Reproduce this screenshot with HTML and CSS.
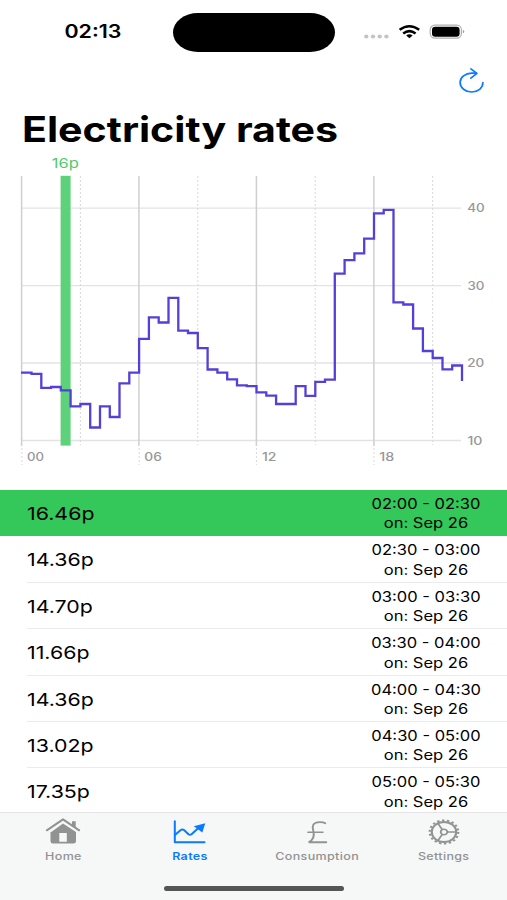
FILE: index.html
```html
<!DOCTYPE html>
<html lang="en">
<head>
    <meta charset="UTF-8">
    <meta name="viewport" content="width=device-width, initial-scale=1.0">
    <title>Electricity rates</title>
    <link rel="stylesheet" href="styles.css">
</head>
<body>
    <!-- Status bar -->
    <div class="status-bar">
        <div class="time"><span class="wide">02:13</span></div>
        <div class="island"></div>
        <div class="status-icons">
            <svg width="104" height="20" viewBox="0 0 104 20">
                <g fill="#c4c4c6">
                    <ellipse cx="4.3" cy="14.5" rx="2.2" ry="1.9"/>
                    <ellipse cx="11" cy="14.5" rx="2.2" ry="1.9"/>
                    <ellipse cx="17.7" cy="14.5" rx="2.2" ry="1.9"/>
                    <ellipse cx="24.4" cy="14.5" rx="2.2" ry="1.9"/>
                </g>
                <g fill="none" stroke="#000" stroke-width="2.5">
                    <path d="M37.6 7.800Q47.400 .700 57.200 7.800"/>
                    <path d="M41.200 11.500Q47.400 6.700 53.600 11.500"/>
                </g>
                <path d="M44.200 13.500Q47.400 11 50.600 13.500L47.400 16.300Z"/>
                <rect x="68.200" y="3.200" width="31.200" height="13" rx="4.600" fill="#fff" stroke="#b0b0b0" stroke-width="1.200"/>
                <rect x="70" y="4.700" width="27.600" height="10" rx="3.200"/>
                <path d="M100.800 7.800Q104 9.700 100.800 11.600Z" fill="#a0a0a0"/>
            </svg>
        </div>
    </div>

    <!-- Header -->
    <header>
        <button class="refresh" aria-label="Refresh">
            <svg width="28" height="28" viewBox="0 0 28 28" fill="none" stroke="#0a7aff" stroke-width="1.7" stroke-linecap="round" stroke-linejoin="round">
                <path d="M24.900 15.600C24.900 21 20 25 13.700 25S2.100 20.800 2.100 15.600 7.300 6.200 13.700 6.200H18"/>
                <path d="M12.900 1.900L18.900 6.400 12.900 11.200"/>
            </svg>
        </button>
        <h1><span class="wide">Electricity rates</span></h1>
    </header>

    <!-- Rates chart -->
    <svg class="chart" width="507" height="334" viewBox="0 156 507 334">
        <g class="grid-h">
            <path d="M21.500 208.200H461M21.500 285.600H461M21.500 363H461M21.500 440.500H461"/>
        </g>
        <g class="grid-v">
            <path d="M21.600 176V446M138.900 176V446M256.400 176V446M373.900 176V446"/>
        </g>
        <g class="grid-dash">
            <path d="M80.400 176V445M197.800 176V445M315.200 176V445M432.700 176V445"/>
            <path d="M21.900 448V465M139.200 448V465M256.400 448V465M373.900 448V465"/>
        </g>
        <rect class="now" x="60.600" y="175.800" width="10" height="269.800"/>
        <path class="line" id="rate-line"/>
        <text class="now-label" x="51.800" y="168.300" textLength="27" lengthAdjust="spacingAndGlyphs">16p</text>
        <g class="axis">
            <text x="27" y="461" textLength="17" lengthAdjust="spacingAndGlyphs">00</text>
            <text x="144.300" y="461" textLength="17.500" lengthAdjust="spacingAndGlyphs">06</text>
            <text x="262" y="461" textLength="14.500" lengthAdjust="spacingAndGlyphs">12</text>
            <text x="379.200" y="461" textLength="15" lengthAdjust="spacingAndGlyphs">18</text>
            <text x="467.300" y="212" textLength="17.500" lengthAdjust="spacingAndGlyphs">40</text>
            <text x="467.500" y="289.600" textLength="17" lengthAdjust="spacingAndGlyphs">30</text>
            <text x="467.300" y="367.200" textLength="17" lengthAdjust="spacingAndGlyphs">20</text>
            <text x="467.500" y="444.600" textLength="15" lengthAdjust="spacingAndGlyphs">10</text>
        </g>
    </svg>

    <!-- Rate list -->
    <ul class="rate-list" id="rate-list"></ul>

    <!-- Tab bar -->
    <nav class="tab-bar">
        <div class="tabs">
            <a class="tab">
                <svg width="36" height="28" viewBox="0 0 36 28">
                    <path d="M6.300 14L18 5.400 31 14V23.300Q31 25.500 28.500 25.500H8Q5.500 25.500 5.500 23.300V14ZM14.300 15V23.800H21.800V15Z" fill="currentColor" fill-rule="evenodd"/>
                    <path d="M1.600 12.600L18 1.300 34.400 12.600" fill="none" stroke="#f6f7f7" stroke-width="5"/>
                    <path d="M1.800 12.300L18 1.300 34.200 12.300" fill="none" stroke="currentColor" stroke-width="2" stroke-linecap="round" stroke-linejoin="round"/>
                    <path d="M27 3.300H30.700V9.500L27 7Z" fill="currentColor"/>
                </svg>
                <span class="wide">Home</span>
            </a>
            <a class="tab active">
                <svg width="36" height="28" viewBox="0 0 36 28">
                    <g fill="none" stroke="currentColor" stroke-width="2" stroke-linecap="round" stroke-linejoin="round">
                        <path d="M2.800 3.200V24.200H32.500"/>
                        <path d="M3.500 16.500L8.800 12Q10.500 10.800 12 12L16.500 16.300Q18 17.400 19.500 16.300L27 9.500"/>
                    </g>
                    <path d="M33.300 5.300L21.800 8.200 30.300 14.500Z" fill="currentColor"/>
                </svg>
                <span class="wide">Rates</span>
            </a>
            <a class="tab">
                <svg width="36" height="28" viewBox="0 0 36 28" fill="none" stroke="currentColor" stroke-width="1.900" stroke-linecap="round">
                    <path d="M26.300 5.300Q24.500 4.100 20.800 4.100C14 4.100 12.800 8 14.200 12.500C15.700 18 14.500 22 9.700 24.200H27.300"/>
                    <path d="M8.900 14.200H24" stroke-width="1.500"/>
                </svg>
                <span class="wide">Consumption</span>
            </a>
            <a class="tab">
                <svg width="36" height="28" viewBox="0 0 36 28" fill="none" stroke="currentColor">
                    <g transform="translate(18 14) scale(1.220 1)">
                        <circle r="10" stroke-width="1.800"/>
                        <circle r="11.700" stroke-width="1.800" stroke-dasharray="2 2.084"/>
                        <circle r="2.700" stroke-width="1.500"/>
                        <path d="M2.500 0H10M-1.300 -2.200L-5 -8.600M-1.300 2.200L-5 8.600" stroke-width="1.500"/>
                    </g>
                </svg>
                <span class="wide">Settings</span>
            </a>
        </div>
        <div class="home-indicator"></div>
    </nav>

    <script src="script.js"></script>
</body>
</html>
```
FILE: styles.css
```css
/* Global Styles */
* {
    box-sizing: border-box;
    margin: 0;
    padding: 0;
}

body {
    display: flex;
    flex-direction: column;
    width: 507px;
    height: 900px;
    overflow: hidden;
    background-color: #fff;
    color: #000;
    font-family: Inter, "Liberation Sans", sans-serif;
}

/* Expanded lettering */
.wide {
    display: inline-block;
    white-space: nowrap;
    transform: scaleX(1.19);
}

/* Status Bar */
.status-bar {
    display: grid;
    grid-template-columns: 173px 162px 1fr;
    height: 64px;
    flex: none;
}

.time {
    padding: 20px 0 0 13px;
    font-size: 18px;
    font-weight: 600;
    line-height: 24px;
    text-align: center;
}

.island {
    height: 39px;
    margin-top: 13px;
    border-radius: 25px / 19.5px;
    background-color: #000;
}

.status-icons {
    padding: 22px 0 0 27px;
}

/* Header */
header {
    height: 92px;
    flex: none;
}

.refresh {
    display: block;
    width: 28px;
    height: 28px;
    margin: 3px 21px 0 auto;
    border: none;
    background: none;
}

h1 {
    margin-top: 12px;
    padding-left: 22px;
    font-size: 35px;
    font-weight: 700;
    line-height: 44px;
}

h1 .wide {
    transform: scaleX(1.175);
    transform-origin: left;
}

/* Chart */
.chart {
    display: block;
    flex: none;
}

.grid-h path {
    stroke: #e3e3e4;
    stroke-width: 1.3;
}

.grid-v path {
    stroke: #cfcfd0;
    stroke-width: 1.5;
}

.grid-dash path {
    stroke: #d8d8d9;
    stroke-width: 1;
    stroke-dasharray: 2 2;
}

.now {
    fill: #5dd27a;
}

.now-label {
    fill: #4ccb6c;
    font-size: 13px;
}

.line {
    fill: none;
    stroke: #5440d8;
    stroke-width: 2.3;
}

.axis text {
    fill: #98989a;
    font-size: 11.5px;
    font-weight: 500;
}

/* Rate List */
.rate-list {
    flex: 1;
    min-height: 0;
    overflow: hidden;
    list-style-type: none;
}

.rate-list li {
    display: flex;
    justify-content: space-between;
    height: 46.4px;
    padding: 0 26px 0 27px;
    background: linear-gradient(#ebebec, #ebebec) 27px 100% / 100% 1px no-repeat;
}

.rate-list li.current {
    background: #34c759;
}

.price {
    font-size: 17.5px;
    line-height: 47px;
}

.price .wide {
    transform: scaleX(1.22);
    transform-origin: left;
}

.slot {
    width: 110px;
    padding-top: 4px;
    font-size: 14px;
    line-height: 19.4px;
    text-align: center;
}

.slot .wide {
    display: block;
    transform: scaleX(1.18);
}

/* Tab Bar */
.tab-bar {
    height: 88px;
    flex: none;
    border-top: 1px solid #e4e4e5;
    background-color: #f6f7f7;
}

.tabs {
    display: grid;
    grid-template-columns: repeat(4, 1fr);
    height: 73px;
}

.tab {
    display: flex;
    flex-direction: column;
    align-items: center;
    padding-top: 5px;
    color: #919292;
    font-size: 10.5px;
    font-weight: 500;
    letter-spacing: 0.3px;
    line-height: 22px;
}

.tab.active {
    color: #0a7aff;
    font-weight: 600;
}

.home-indicator {
    width: 180px;
    height: 5px;
    margin: 0 auto;
    border-radius: 3px;
    background-color: #555;
}
```
FILE: script.js
```js
// Line height on the chart for every half hour slot
const levels = [
    372.7, 373.8, 387.8, 387, 390.3, 406.3, 404, 427.5, 406.3, 417, 383.3, 372.7,
    338.8, 317.3, 322.5, 297.9, 330.7, 333, 348.2, 369.5, 372.7, 379.3, 385.3, 386.2,
    392.3, 395.7, 404, 404, 386.2, 395.8, 381.8, 379.7, 273.7, 260.2, 253.3, 238.7,
    213.3, 209.8, 302.3, 304.5, 328.5, 351, 358, 369.3, 365.5, 381
];

const rates = [
    { price: "16.46p", from: "02:00", to: "02:30" },
    { price: "14.36p", from: "02:30", to: "03:00" },
    { price: "14.70p", from: "03:00", to: "03:30" },
    { price: "11.66p", from: "03:30", to: "04:00" },
    { price: "14.36p", from: "04:00", to: "04:30" },
    { price: "13.02p", from: "04:30", to: "05:00" },
    { price: "17.35p", from: "05:00", to: "05:30" }
];

// Draw the stepped line
function renderLine() {
    let d = `M21 ${levels[0]}`;
    for (let i = 1; i < levels.length; i++) {
        d += `H${(21.7 + i * 9.785).toFixed(1)}V${levels[i]}`;
    }
    document.getElementById("rate-line").setAttribute("d", d);
}

// Fill the list, first slot is the current one
function renderRates() {
    const list = document.getElementById("rate-list");
    rates.forEach((rate, index) => {
        const li = document.createElement("li");
        if (index === 0) li.className = "current";
        li.innerHTML = `
            <div class="price"><span class="wide">${rate.price}</span></div>
            <div class="slot">
                <span class="wide">${rate.from} - ${rate.to}</span>
                <span class="wide">on: Sep 26</span>
            </div>
        `;
        list.appendChild(li);
    });
}

renderLine();
renderRates();
```
